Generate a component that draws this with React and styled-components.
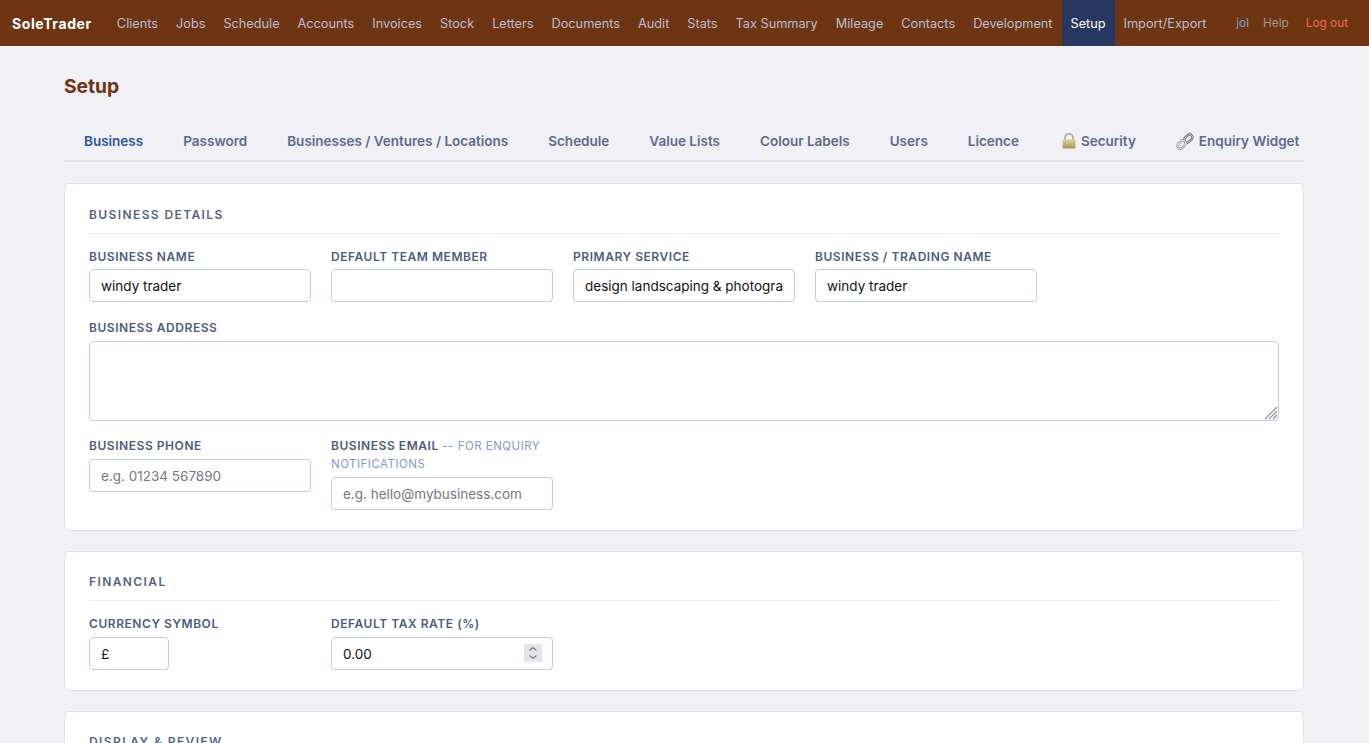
import React from "react";
import styled, { createGlobalStyle } from "styled-components";

const Global = createGlobalStyle`
  html, body { margin: 0; height: 100%; overflow: hidden; background: #f0f0f5; }
  body { font-family: Inter, "Liberation Sans", sans-serif; -webkit-font-smoothing: antialiased; }
  * { box-sizing: border-box; }
`;

const Nav = styled.nav`
  height: 46px;
  background: #6e3512;
  display: flex;
  align-items: stretch;
  padding: 0 12px;
`;
const Logo = styled.div`
  display: flex;
  align-items: center;
  color: #fff;
  font-size: 14px;
  font-weight: 700;
  letter-spacing: 0.6px;
  margin-right: 16px;
`;
const NavLink = styled.a`
  display: flex;
  align-items: center;
  padding: 1px 9px 0;
  font-size: 12.73px;
  color: ${(p) => (p.$active ? "#fff" : "#bcbdd4")};
  background: ${(p) => (p.$active ? "#283760" : "transparent")};
`;
const NavRight = styled.div`
  margin-left: auto;
  display: flex;
  align-items: center;
  gap: 14px;
  padding-right: 9px;
  font-size: 11.8px;
`;
const NavMeta = styled.span`
  color: ${(p) => p.$color};
  margin-left: ${(p) => p.$offset || 0};
`;
const Page = styled.main`
  padding: 0 65px 0 64px;
`;
const Title = styled.h1`
  margin: 0;
  padding-top: 28px;
  height: 78px;
  font-size: 19.2px;
  line-height: 24px;
  font-weight: 700;
  color: #6e3512;
`;
const Tabs = styled.div`
  display: flex;
  height: 38px;
  border-bottom: 2px solid #dde0ea;
  margin-bottom: 21px;
`;
const Tab = styled.a`
  display: flex;
  align-items: center;
  gap: 5px;
  height: 34px;
  padding: 0 20px;
  font-size: 13.5px;
  font-weight: 600;
  white-space: nowrap;
  color: ${(p) => (p.$active ? "#2b5599" : "#5c6b8f")};
`;
const Card = styled.section`
  background: #fff;
  border: 1px solid #dde0ec;
  border-radius: 6px;
  padding: 23.6px 24px 19.8px;
  margin-bottom: 20px;
`;
const CardTitle = styled.h2`
  margin: 0 0 14px;
  padding-bottom: 12px;
  height: 26px;
  border-bottom: 1px solid #ecedf3;
  font-size: 12px;
  line-height: 14px;
  font-weight: 600;
  letter-spacing: 1.4px;
  text-transform: uppercase;
  color: #566484;
`;
const Row = styled.div`
  display: flex;
  align-items: flex-start;
  flex-wrap: wrap;
  gap: 20px;
  margin-bottom: 16.8px;
  &:last-child { margin-bottom: 0; }
`;
const Field = styled.div`
  position: relative;
  width: ${(p) => (p.$full ? "100%" : "222px")};
`;
const Label = styled.label`
  display: block;
  margin-bottom: 3.6px;
  font-size: 12px;
  line-height: 18px;
  font-weight: 600;
  letter-spacing: 0.55px;
  text-transform: uppercase;
  color: #4e5c7e;
`;
const Hint = styled.span`
  font-weight: 400;
  font-size: 11.4px;
  color: #7f99c8;
`;
const Input = styled.input`
  display: block;
  width: ${(p) => p.$width || "100%"};
  height: 33px;
  padding: 0.8px 10px 0 11px;
  border: 1px solid #c2cce4;
  border-radius: 4px;
  background: #fff;
  outline: none;
  font-family: inherit;
  font-size: 13.5px;
  color: #111;
  &::placeholder { color: #77777f; }
`;
const Textarea = styled.textarea`
  display: block;
  width: 100%;
  height: 80px;
  padding: 8px 11px;
  border: 1px solid #c2cce4;
  border-radius: 4px;
  outline: none;
  resize: none;
  font-family: inherit;
  font-size: 13.5px;
`;
const Grip = styled.svg`
  position: absolute;
  right: 1px;
  bottom: 1px;
  width: 15px;
  height: 15px;
`;
const SpinWrap = styled.div`
  position: relative;
`;
const Spin = styled.svg`
  position: absolute;
  top: 7px;
  right: 11px;
  width: 18px;
  height: 18px;
  background: #e4e4e9;
`;
const LockSvg = styled.svg`
  margin-left: 3px;
`;

const LockIcon = () => (
  <LockSvg width="14" height="16" viewBox="0 0 14 16">
    <defs>
      <linearGradient id="lk" x1="0" y1="0" x2="0" y2="1">
        <stop offset="0" stopColor="#e0d48e" />
        <stop offset="1" stopColor="#a8965a" />
      </linearGradient>
    </defs>
    <path d="M3 7V4.800a4 4 0 0 1 8 0V7" fill="none" stroke="#a9adb5" strokeWidth="1.800" />
    <rect x="0.500" y="6.500" width="13" height="9" rx="1.200" fill="url(#lk)" />
  </LockSvg>
);
const LinkIcon = () => (
  <svg width="18" height="17" viewBox="0 0 18 17" fill="none">
    <rect x="7.800" y="2.700" width="9" height="5.600" rx="2.800" transform="rotate(-45 12.300 5.500)" stroke="#5e5e64" strokeWidth="2.400" />
    <rect x="7.800" y="2.700" width="9" height="5.600" rx="2.800" transform="rotate(-45 12.300 5.500)" stroke="#c4c6cb" strokeWidth="1" />
    <rect x="1.200" y="8.700" width="9" height="5.600" rx="2.800" transform="rotate(-45 5.700 11.500)" stroke="#85858c" strokeWidth="2.400" />
    <rect x="1.200" y="8.700" width="9" height="5.600" rx="2.800" transform="rotate(-45 5.700 11.500)" stroke="#e2e3e6" strokeWidth="1.200" />
  </svg>
);

const links = ["Clients","Jobs","Schedule","Accounts","Invoices","Stock","Letters","Documents","Audit","Stats","Tax Summary","Mileage","Contacts","Development","Setup","Import/Export"];

export default function App() {
  return (
    <>
      <Global />
      <Nav>
        <Logo>SoleTrader</Logo>
        {links.map((l) => (
          <NavLink key={l} $active={l === "Setup"}>{l}</NavLink>
        ))}
        <NavRight>
          <NavMeta $color="#7f9fd8">jol</NavMeta>
          <NavMeta $color="#a8958c">Help</NavMeta>
          <NavMeta $color="#f06a5c" $offset="3px">Log out</NavMeta>
        </NavRight>
      </Nav>
      <Page>
        <Title>Setup</Title>
        <Tabs>
          <Tab $active>Business</Tab>
          <Tab>Password</Tab>
          <Tab>Businesses / Ventures / Locations</Tab>
          <Tab>Schedule</Tab>
          <Tab>Value Lists</Tab>
          <Tab>Colour Labels</Tab>
          <Tab>Users</Tab>
          <Tab>Licence</Tab>
          <Tab><LockIcon />Security</Tab>
          <Tab><LinkIcon />Enquiry Widget</Tab>
        </Tabs>
        <Card>
          <CardTitle>Business Details</CardTitle>
          <Row>
            <Field><Label>Business Name</Label><Input defaultValue="windy trader" /></Field>
            <Field><Label>Default Team Member</Label><Input /></Field>
            <Field><Label>Primary Service</Label><Input defaultValue="design landscaping & photography" /></Field>
            <Field><Label>Business / Trading Name</Label><Input defaultValue="windy trader" /></Field>
          </Row>
          <Row>
            <Field $full>
              <Label>Business Address</Label>
              <Textarea />
              <Grip viewBox="0 0 15 15" stroke="#8e8e94" strokeWidth="1.200">
                <path d="M2 14L14 2M6 14L14 6M10 14L14 10" />
              </Grip>
            </Field>
          </Row>
          <Row>
            <Field><Label>Business Phone</Label><Input placeholder="e.g. 01234 567890" /></Field>
            <Field>
              <Label>Business Email <Hint>-- for enquiry notifications</Hint></Label>
              <Input placeholder="e.g. hello@mybusiness.com" />
            </Field>
          </Row>
        </Card>
        <Card>
          <CardTitle>Financial</CardTitle>
          <Row>
            <Field><Label>Currency Symbol</Label><Input $width="80px" defaultValue="£" /></Field>
            <Field>
              <Label>Default Tax Rate (%)</Label>
              <SpinWrap>
                <Input defaultValue="0.00" />
                <Spin viewBox="0 0 18 18" fill="none" stroke="#77777f" strokeWidth="1.200">
                  <path d="M5.500 6.500L9 3.500l3.500 3M5.500 11.500L9 14.500l3.500-3" />
                </Spin>
              </SpinWrap>
            </Field>
          </Row>
        </Card>
        <Card>
          <CardTitle>Display &amp; Review</CardTitle>
        </Card>
      </Page>
    </>
  );
}
